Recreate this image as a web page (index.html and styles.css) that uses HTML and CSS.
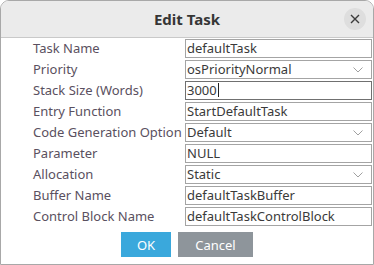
FILE: index.html
```html
<!DOCTYPE html>
<html lang="en">
<head>
    <meta charset="UTF-8">
    <title>Edit Task</title>
    <link rel="stylesheet" href="styles.css">
</head>
<body>
    <div class="dialog">
        <div class="titlebar">
            <span class="title">Edit Task</span>
            <span class="close">
                <svg width="10" height="10" viewBox="0 0 10 10"><path d="M1 1L9 9M9 1L1 9" stroke="#3c3c3c" stroke-width="1.4"/></svg>
            </span>
        </div>
        <div class="content">
            <div class="form-grid">
                <label>Task Name</label>
                <div class="field">defaultTask</div>

                <label>Priority</label>
                <div class="field select">osPriorityNormal<svg class="chev" width="10" height="6" viewBox="0 0 10 6"><path d="M0.5 0.5L5 5L9.5 0.5" fill="none" stroke="#a0a0a0" stroke-width="1"/></svg></div>

                <label>Stack Size (Words)</label>
                <div class="field focused">3000<span class="caret"></span></div>

                <label>Entry Function</label>
                <div class="field">StartDefaultTask</div>

                <label>Code Generation Option</label>
                <div class="field select">Default<svg class="chev" width="10" height="6" viewBox="0 0 10 6"><path d="M0.5 0.5L5 5L9.5 0.5" fill="none" stroke="#a0a0a0" stroke-width="1"/></svg></div>

                <label>Parameter</label>
                <div class="field">NULL</div>

                <label>Allocation</label>
                <div class="field select">Static<svg class="chev" width="10" height="6" viewBox="0 0 10 6"><path d="M0.5 0.5L5 5L9.5 0.5" fill="none" stroke="#a0a0a0" stroke-width="1"/></svg></div>

                <label>Buffer Name</label>
                <div class="field">defaultTaskBuffer</div>

                <label>Control Block Name</label>
                <div class="field">defaultTaskControlBlock</div>
            </div>
            <div class="buttons">
                <button class="btn ok">OK</button>
                <button class="btn cancel">Cancel</button>
            </div>
        </div>
    </div>
</body>
</html>
```

FILE: styles.css
```css
/* Dialog shell */
body {
    margin: 0;
    background: #ffffff;
    font-family: "Noto Sans", "DejaVu Sans", sans-serif;
}

.dialog {
    width: 374px;
    height: 265px;
    box-sizing: border-box;
    border: 1px solid #a8a8a8;
    border-radius: 9px 9px 0 0;
    overflow: hidden;
    background: #ffffff;
}

.titlebar {
    height: 36px;
    background: #ebebeb;
    border-bottom: 1px solid #c9c9c9;
    display: flex;
    align-items: center;
    justify-content: center;
    position: relative;
}

.title {
    font-size: 15px;
    font-weight: bold;
    color: #363636;
}

.close {
    position: absolute;
    right: 7px;
    top: 7px;
    width: 22px;
    height: 22px;
    border-radius: 50%;
    background: #dedede;
    display: flex;
    align-items: center;
    justify-content: center;
}

/* Form */
.content {
    padding-top: 1px;
}

.form-grid {
    display: grid;
    grid-template-columns: 184px 187px;
    row-gap: 2px;
}

.form-grid label {
    padding-left: 32px;
    font-size: 13px;
    color: #5a5060;
    line-height: 19px;
    white-space: nowrap;
}

.field {
    height: 19px;
    box-sizing: border-box;
    border: 1px solid #a4a4a4;
    padding-left: 1px;
    font-size: 13px;
    line-height: 17px;
    color: #3a3a3a;
    position: relative;
    white-space: nowrap;
}

.field.focused {
    border-color: #707070;
}

.caret {
    display: inline-block;
    width: 1px;
    height: 14px;
    background: #222222;
    vertical-align: -2px;
    margin-left: 1px;
}

.chev {
    position: absolute;
    right: 8px;
    top: 6px;
}

/* Buttons */
.buttons {
    display: flex;
    gap: 7px;
    padding-left: 120px;
    margin-top: 6px;
}

.btn {
    height: 25px;
    border: none;
    color: #ffffff;
    font-family: inherit;
    font-size: 13px;
    padding: 0;
}

.ok {
    width: 50px;
    background: #3aa8dc;
}

.cancel {
    width: 75px;
    background: #8e959b;
}
```
